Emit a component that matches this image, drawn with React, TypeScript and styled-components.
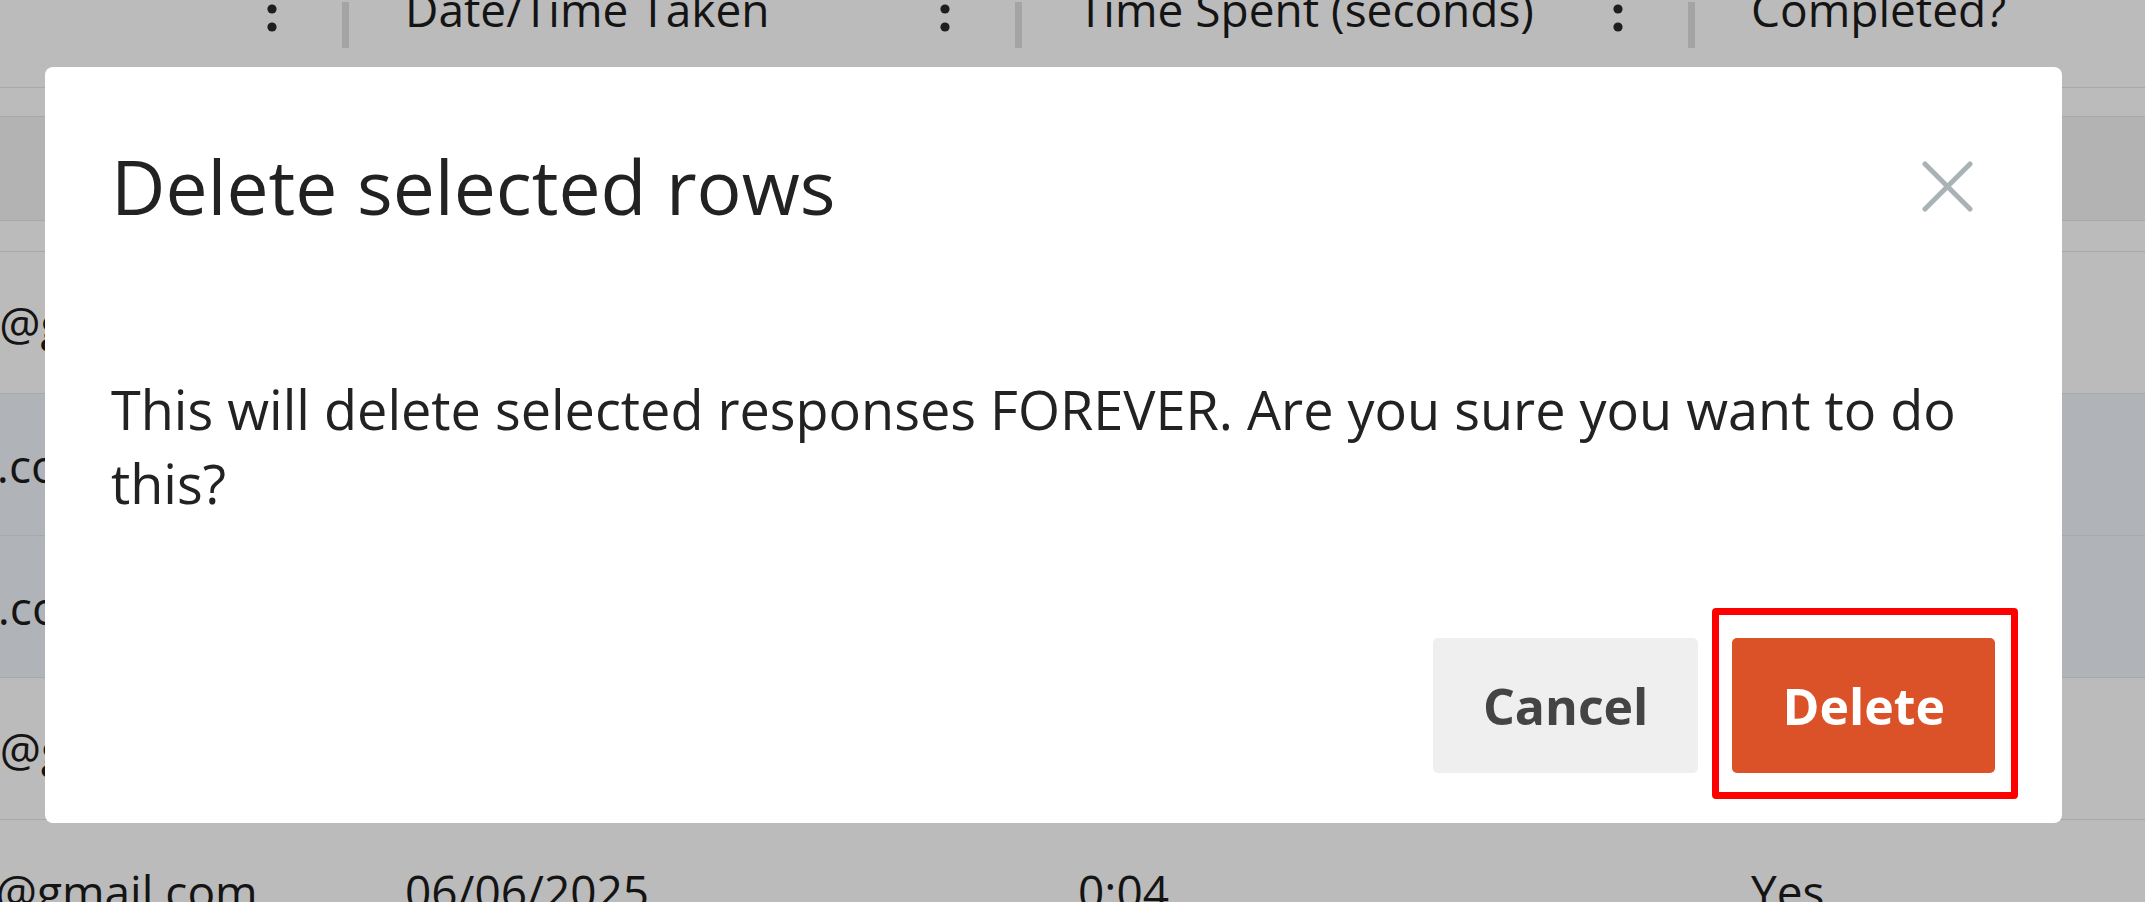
import React, { useLayoutEffect, useRef } from "react";
import styled, { createGlobalStyle } from "styled-components";

// the table behind the dialog is scrolled, like in the screenshot
const SCROLL_X = 308;
const SCROLL_Y = 70;

const columns = ["Email", "Date/Time Taken", "Time Spent (seconds)", "Completed?", "Score"];

type Response = {
  email: string;
  date: string;
  time: string;
  done: string;
  score: string;
  selected?: boolean;
};

const responses: Response[] = [
  { email: "paul.hunter@gmail.com", date: "06/04/2025", time: "1:12", done: "Yes", score: "8/10" },
  { email: "ruth@acme.com", date: "06/05/2025", time: "0:21", done: "No", score: "3/10", selected: true },
  { email: "rob@vertex.com", date: "06/05/2025", time: "0:09", done: "No", score: "1/10", selected: true },
  { email: "amy.brooks@gmail.com", date: "06/05/2025", time: "0:55", done: "Yes", score: "7/10" },
  { email: "mark.evans@gmail.com", date: "06/06/2025", time: "0:04", done: "Yes", score: "6/10" },
  { email: "lena.ortiz@gmail.com", date: "06/07/2025", time: "0:37", done: "No", score: "2/10" },
];

const GlobalStyle = createGlobalStyle`
  html, body {
    margin: 0;
    padding: 0;
    overflow: hidden;
    background: #fff;
    font-family: "Open Sans", "Noto Sans", sans-serif;
  }
  * {
    box-sizing: border-box;
  }
`;

const TableViewport = styled.div`
  width: 100vw;
  height: 100vh;
  overflow: auto;
  scrollbar-width: none;

  &::-webkit-scrollbar {
    display: none;
  }
`;

const Grid = styled.div`
  display: grid;
  grid-template-columns: 657px 673px 673px 673px 673px;
  width: max-content;
  color: #1c1c1c;
  font-size: 46px;
`;

const HeaderCell = styled.div`
  display: flex;
  align-items: center;
  height: 158px;
  padding-left: 56px;
  border-bottom: 1px solid #e6e6e6;
`;

const HeaderLabel = styled.span`
  flex: 1;
  white-space: nowrap;
  overflow: hidden;
`;

const Separator = styled.span`
  width: 7px;
  height: 46px;
  margin-left: 65px;
  background: #e0e0e0;
  margin-top: 32px;
`;

const Band = styled.div<{ $height: number; $shade?: boolean }>`
  grid-column: 1 / -1;
  height: ${(p) => p.$height}px;
  background: ${(p) => (p.$shade ? "#f4f4f4" : "#fff")};
  border-bottom: 1px solid #e6e6e6;
`;

const Cell = styled.div<{ $selected?: boolean }>`
  display: flex;
  align-items: center;
  height: 142px;
  padding-left: 56px;
  white-space: nowrap;
  overflow: hidden;
  background: ${(p) => (p.$selected ? "#f0f4fb" : "#fff")};
  border-bottom: 1px solid #e6e6e6;
`;

const Overlay = styled.div`
  position: fixed;
  inset: 0;
  display: flex;
  align-items: flex-start;
  padding: 67px 0 0 45px;
  background: rgba(0, 0, 0, 0.267);
`;

const Modal = styled.div`
  width: 2017px;
  padding: 68px 67px 50px 66px;
  background: #fff;
  border-radius: 8px;
  color: #222;
`;

const ModalHeader = styled.div`
  display: flex;
  align-items: center;
  justify-content: space-between;
`;

const Title = styled.h2`
  margin: 0;
  font-size: 75px;
  font-weight: 400;
  line-height: normal;
`;

const CloseButton = styled.button`
  display: flex;
  width: 51px;
  height: 51px;
  margin-right: 22px;
  padding: 0;
  border: none;
  background: none;
  cursor: pointer;
`;

const Message = styled.p`
  margin: 135px 0 0;
  font-size: 54px;
  line-height: 74px;
`;

const Footer = styled.div`
  display: flex;
  justify-content: flex-end;
  gap: 34px;
  margin-top: 118px;
`;

const Button = styled.button<{ $danger?: boolean }>`
  height: 135px;
  padding: 0 50px;
  border: none;
  border-radius: 5px;
  font-family: "Open Sans", "Noto Sans", sans-serif;
  font-size: 50px;
  font-weight: 700;
  background: ${(p) => (p.$danger ? "#db5229" : "#efefef")};
  color: ${(p) => (p.$danger ? "#fff" : "#444")};
  cursor: pointer;
`;

// red annotation drawn round the Delete button
const Highlight = styled.div`
  position: relative;

  &::after {
    content: "";
    position: absolute;
    top: -30px;
    left: -20px;
    right: -23px;
    bottom: -26px;
    border: 7px solid #ff0000;
    border-radius: 4px;
    pointer-events: none;
  }
`;

const Kebab = () => (
  <svg width="10" height="46" viewBox="0 0 10 46" fill="#2a2a2a">
    <circle cx="5" cy="5" r="4.6" />
    <circle cx="5" cy="23" r="4.6" />
    <circle cx="5" cy="41" r="4.6" />
  </svg>
);

const CloseIcon = () => (
  <svg width="51" height="51" viewBox="0 0 51 51" stroke="#a9b3b5" strokeWidth="5" strokeLinecap="round">
    <line x1="3" y1="3" x2="48" y2="48" />
    <line x1="48" y1="3" x2="3" y2="48" />
  </svg>
);

const App = () => {
  const viewportRef = useRef<HTMLDivElement>(null);

  useLayoutEffect(() => {
    if (viewportRef.current) {
      viewportRef.current.scrollLeft = SCROLL_X;
      viewportRef.current.scrollTop = SCROLL_Y;
    }
  }, []);

  return (
    <>
      <GlobalStyle />
      <TableViewport ref={viewportRef}>
        <Grid>
          {columns.map((col) => (
            <HeaderCell key={col}>
              <HeaderLabel>{col}</HeaderLabel>
              <Kebab />
              <Separator />
            </HeaderCell>
          ))}
          <Band $height={29} />
          <Band $height={104} $shade />
          <Band $height={31} />
          {responses.map((r) => (
            <React.Fragment key={r.email}>
              <Cell $selected={r.selected}>{r.email}</Cell>
              <Cell $selected={r.selected}>{r.date}</Cell>
              <Cell $selected={r.selected}>{r.time}</Cell>
              <Cell $selected={r.selected}>{r.done}</Cell>
              <Cell $selected={r.selected}>{r.score}</Cell>
            </React.Fragment>
          ))}
        </Grid>
      </TableViewport>

      <Overlay>
        <Modal role="dialog" aria-labelledby="delete-title">
          <ModalHeader>
            <Title id="delete-title">Delete selected rows</Title>
            <CloseButton aria-label="Close">
              <CloseIcon />
            </CloseButton>
          </ModalHeader>
          <Message>
            This will delete selected responses FOREVER. Are you sure you want to do this?
          </Message>
          <Footer>
            <Button>Cancel</Button>
            <Highlight>
              <Button $danger>Delete</Button>
            </Highlight>
          </Footer>
        </Modal>
      </Overlay>
    </>
  );
};

export default App;
